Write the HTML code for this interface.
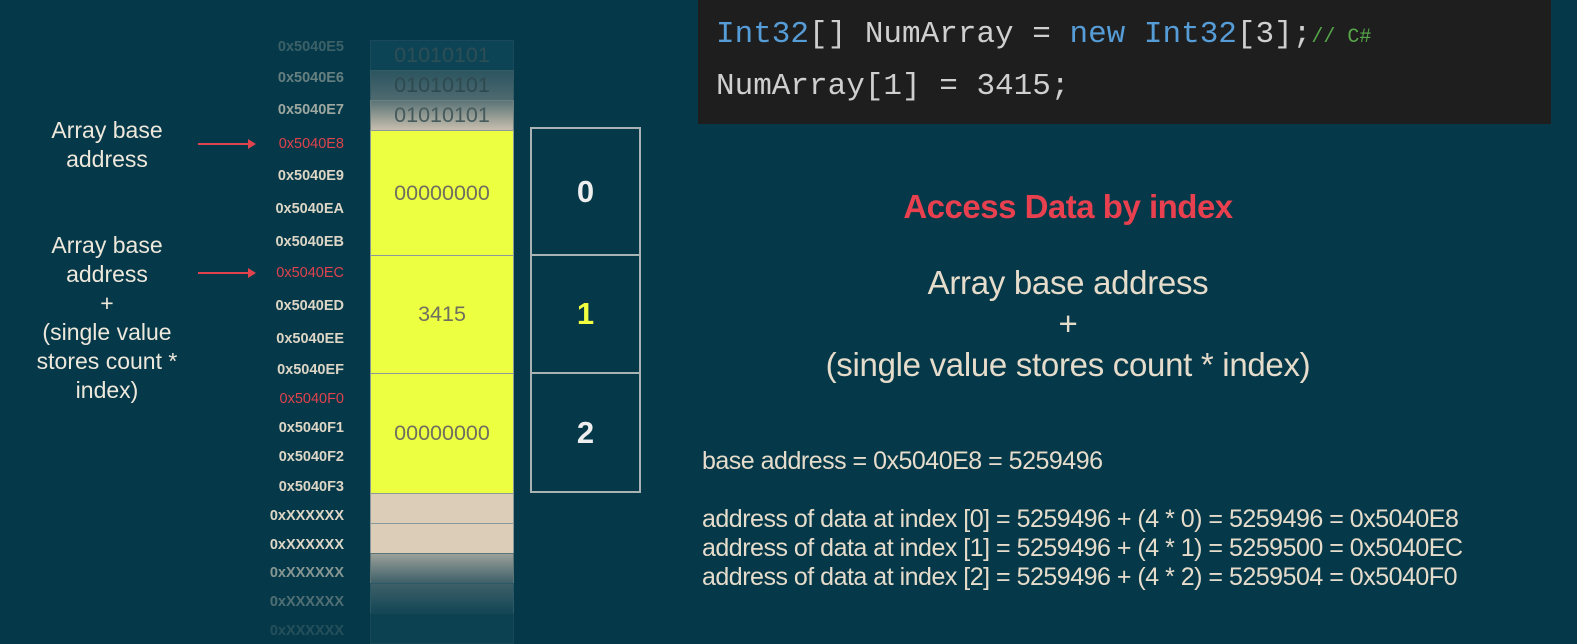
<!DOCTYPE html>
<html><head><meta charset="utf-8"><style>
body{margin:0;width:1577px;height:637px;background:#053848;position:relative;overflow:hidden;font-family:"Liberation Sans",Arial,sans-serif;}
.a{position:absolute;right:1233px;font-size:14.5px;font-weight:bold;color:#ddd6c6;white-space:nowrap;transform:translateY(-50%)}
.r{color:#e0424e;font-weight:normal}
.c{position:absolute;left:370px;width:144px;box-sizing:border-box;border:1px solid #8a9a9a;display:flex;align-items:center;justify-content:center;font-size:21.5px;color:#6f6f5f}
.i{position:absolute;left:530px;width:111px;box-sizing:border-box;border:2px solid #a9b3b3;display:flex;align-items:center;justify-content:center;font-size:31px;font-weight:bold;color:#eee}
.lab{position:absolute;width:200px;left:7px;text-align:center;color:#eee8dc;font-size:23px;line-height:29px}
.arr{position:absolute;left:198px;width:52px;height:2px;background:#e0424e}
.arr:after{content:"";position:absolute;right:-6px;top:-4px;border-left:8px solid #e0424e;border-top:5px solid transparent;border-bottom:5px solid transparent}
.t{position:absolute;color:#e6dccb;white-space:nowrap}
</style></head><body>
<div class="c" style="top:40px;height:31px;background:#0d4455;color:#2e4e55;border-color:#19495a">01010101</div>
<div class="c" style="top:70px;height:31px;background:linear-gradient(#2b5560,#4f6a70);color:#2e4a50;border-color:#345a64">01010101</div>
<div class="c" style="top:100px;height:31px;background:linear-gradient(#5a7476,#c8beaf);color:#445a5c;border-color:#6c8080">01010101</div>
<div class="c" style="top:130px;height:126px;background:#ecff40">00000000</div>
<div class="c" style="top:255px;height:119px;background:#ecff40">3415</div>
<div class="c" style="top:373px;height:121px;background:#ecff40">00000000</div>
<div class="c" style="top:493px;height:31px;background:#dccdb8"></div>
<div class="c" style="top:523px;height:31px;background:#dccdb8"></div>
<div class="c" style="top:553px;height:31px;background:linear-gradient(#9aa09a,#3e6068);border-color:#5a7478"></div>
<div class="c" style="top:583px;height:31px;background:linear-gradient(#3e6068,#134656);border-color:#2a5866"></div>
<div class="c" style="top:613px;height:31px;background:#0b4150;border-color:#164858"></div>

<div class="i" style="top:127px;height:129px">0</div>
<div class="i" style="top:254px;height:120px;color:#f2ff40">1</div>
<div class="i" style="top:372px;height:121px">2</div>

<div class="a" style="top:47px;opacity:.25">0x5040E5</div>
<div class="a" style="top:78px;opacity:.45">0x5040E6</div>
<div class="a" style="top:110px;opacity:.7">0x5040E7</div>
<div class="a r" style="top:144px">0x5040E8</div>
<div class="a" style="top:176px">0x5040E9</div>
<div class="a" style="top:209px">0x5040EA</div>
<div class="a" style="top:242px">0x5040EB</div>
<div class="a r" style="top:273px">0x5040EC</div>
<div class="a" style="top:306px">0x5040ED</div>
<div class="a" style="top:339px">0x5040EE</div>
<div class="a" style="top:370px">0x5040EF</div>
<div class="a r" style="top:399px">0x5040F0</div>
<div class="a" style="top:428px">0x5040F1</div>
<div class="a" style="top:457px">0x5040F2</div>
<div class="a" style="top:487px">0x5040F3</div>
<div class="a" style="top:516px">0xXXXXXX</div>
<div class="a" style="top:545px">0xXXXXXX</div>
<div class="a" style="top:573px;opacity:.6">0xXXXXXX</div>
<div class="a" style="top:602px;opacity:.35">0xXXXXXX</div>
<div class="a" style="top:631px;opacity:.15">0xXXXXXX</div>

<div class="lab" style="top:116px">Array base<br>address</div>
<div class="lab" style="top:231px">Array base<br>address<br>+<br>(single value<br>stores count *<br>index)</div>
<div class="arr" style="top:143px"></div>
<div class="arr" style="top:272px"></div>

<div style="position:absolute;left:698px;top:0;width:853px;height:124px;background:#1e1e1e"></div>
<div class="t" style="left:716px;top:17px;font-family:'Liberation Mono',monospace;font-size:31px;color:#cfcfcf">
<span style="color:#569cd6">Int32</span>[] NumArray = <span style="color:#569cd6">new</span> <span style="color:#569cd6">Int32</span>[3];<span style="color:#57a64a;font-size:20px">// C#</span></div>
<div class="t" style="left:716px;top:69px;font-family:'Liberation Mono',monospace;font-size:31px;color:#cfcfcf">NumArray[1] = 3415;</div>

<div class="t" style="left:768px;width:600px;text-align:center;top:188px;font-size:33px;font-weight:bold;color:#e8404e;letter-spacing:-0.5px">Access Data by index</div>
<div class="t" style="left:768px;width:600px;text-align:center;top:262px;font-size:33px;line-height:41px;color:#e6dccb;letter-spacing:-0.3px">Array base address<br>+<br>(single value stores count * index)</div>

<div class="t" style="left:702px;top:447px;font-size:25px;letter-spacing:-0.5px">base address = 0x5040E8 = 5259496</div>
<div class="t" style="left:702px;top:505px;font-size:25px;line-height:29px;letter-spacing:-0.5px">address of data at index [0] = 5259496 + (4 * 0) = 5259496 = 0x5040E8<br>address of data at index [1] = 5259496 + (4 * 1) = 5259500 = 0x5040EC<br>address of data at index [2] = 5259496 + (4 * 2) = 5259504 = 0x5040F0</div>
</body></html>
